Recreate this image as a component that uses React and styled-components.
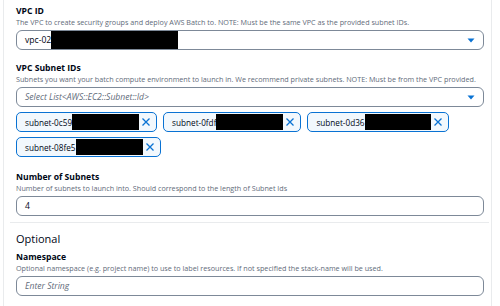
import styled, { createGlobalStyle } from "styled-components";

const GlobalStyle = createGlobalStyle`
  html, body {
    margin: 0;
    padding: 0;
    background: #ffffff;
  }
  body {
    font-family: "Open Sans", "Noto Sans", sans-serif;
    color: #000716;
  }
`;

const Page = styled.div`
  margin-left: 3px;
  width: 489px;
  height: 306px;
  box-sizing: border-box;
  border-left: 1px solid #e9ebed;
  border-right: 1px solid #e9ebed;
  overflow: hidden;
`;

const Section = styled.div`
  display: flex;
  flex-direction: column;
  gap: ${props => props.$gap || 13}px;
  padding: ${props => props.$top || 6}px 7px 0 12px;
`;

const Divider = styled.hr`
  border: none;
  border-top: 1px solid #e9ebed;
  margin: 6px 2px 0 6px;
`;

const Heading = styled.h2`
  margin: 0;
  font-size: 11px;
  line-height: 14px;
  font-weight: 400;
  color: #000716;
`;

const Field = styled.div`
  display: flex;
  flex-direction: column;
`;

const Label = styled.div`
  font-size: 8.6px;
  line-height: 11px;
  font-weight: 700;
`;

const Description = styled.div`
  font-size: 7.2px;
  line-height: 10px;
  color: #5f6b7a;
  margin-bottom: 3px;
`;

const Box = styled.div`
  display: flex;
  align-items: center;
  height: 20px;
  box-sizing: border-box;
  border: 1px solid #7d8998;
  border-radius: 6px;
  padding: 0 8px 0 8px;
  font-size: 8.6px;
  color: ${props => (props.$placeholder ? "#5f6b7a" : "#000716")};
  font-style: ${props => (props.$placeholder ? "italic" : "normal")};
  overflow: hidden;
`;

const Grow = styled.span`
  flex: 1;
  display: flex;
  align-items: center;
  height: 100%;
`;

const Redacted = styled.span`
  display: inline-block;
  background: #000;
  width: ${props => props.$w}px;
  height: ${props => props.$h}px;
  flex-shrink: 0;
`;

const Tokens = styled.div`
  display: flex;
  flex-wrap: wrap;
  gap: 5px 6px;
  margin: 5px 0 2px;
`;

const Token = styled.div`
  display: flex;
  align-items: center;
  height: 20px;
  box-sizing: border-box;
  border: 1px solid #0972d3;
  border-radius: 5px;
  background: #f2f8fd;
  padding: 0 5px 0 8px;
  font-size: 8.2px;
  color: #000716;
`;

const Dismiss = styled.span`
  display: flex;
  margin-left: 2px;
  color: #0972d3;
`;

const Caret = () => (
  <svg width="8" height="5" viewBox="0 0 8 5">
    <path d="M0.5 0.5 H7.5 L4 4.5 Z" fill="#0972d3" />
  </svg>
);

const CloseIcon = () => (
  <svg width="10" height="10" viewBox="0 0 10 10">
    <path d="M1.5 1.5 L8.5 8.5 M8.5 1.5 L1.5 8.5" stroke="#0972d3" strokeWidth="1.3" fill="none" />
  </svg>
);

const subnets = [
  { id: "subnet-0c59", w: 67 },
  { id: "subnet-0fdf", w: 67 },
  { id: "subnet-0d36", w: 66 },
  { id: "subnet-08fe5", w: 67 },
];

export default function App() {
  return (
    <>
      <GlobalStyle />
      <Page>
        <Section>
          <Field>
            <Label>VPC ID</Label>
            <Description>
              The VPC to create security groups and deploy AWS Batch to. NOTE: Must be the same VPC as the provided subnet IDs.
            </Description>
            <Box>
              <Grow>
                vpc-02
                <Redacted $w={127} $h={21} />
              </Grow>
              <Caret />
            </Box>
          </Field>

          <Field>
            <Label>VPC Subnet IDs</Label>
            <Description>
              Subnets you want your batch compute environment to launch in. We recommend private subnets. NOTE: Must be from the VPC provided.
            </Description>
            <Box $placeholder>
              <Grow>{"Select List<AWS::EC2::Subnet::Id>"}</Grow>
              <Caret />
            </Box>
            <Tokens>
              {subnets.map(s => (
                <Token key={s.id}>
                  {s.id}
                  <Redacted $w={s.w} $h={16} />
                  <Dismiss>
                    <CloseIcon />
                  </Dismiss>
                </Token>
              ))}
            </Tokens>
          </Field>

          <Field>
            <Label>Number of Subnets</Label>
            <Description>
              Number of subnets to launch into. Should correspond to the length of Subnet Ids
            </Description>
            <Box>4</Box>
          </Field>
        </Section>

        <Divider />

        <Section $top={9} $gap={6}>
          <Heading>Optional</Heading>
          <Field>
            <Label>Namespace</Label>
            <Description>
              Optional namespace (e.g. project name) to use to label resources. If not specified the stack-name will be used.
            </Description>
            <Box $placeholder>Enter String</Box>
          </Field>
        </Section>
      </Page>
    </>
  );
}
